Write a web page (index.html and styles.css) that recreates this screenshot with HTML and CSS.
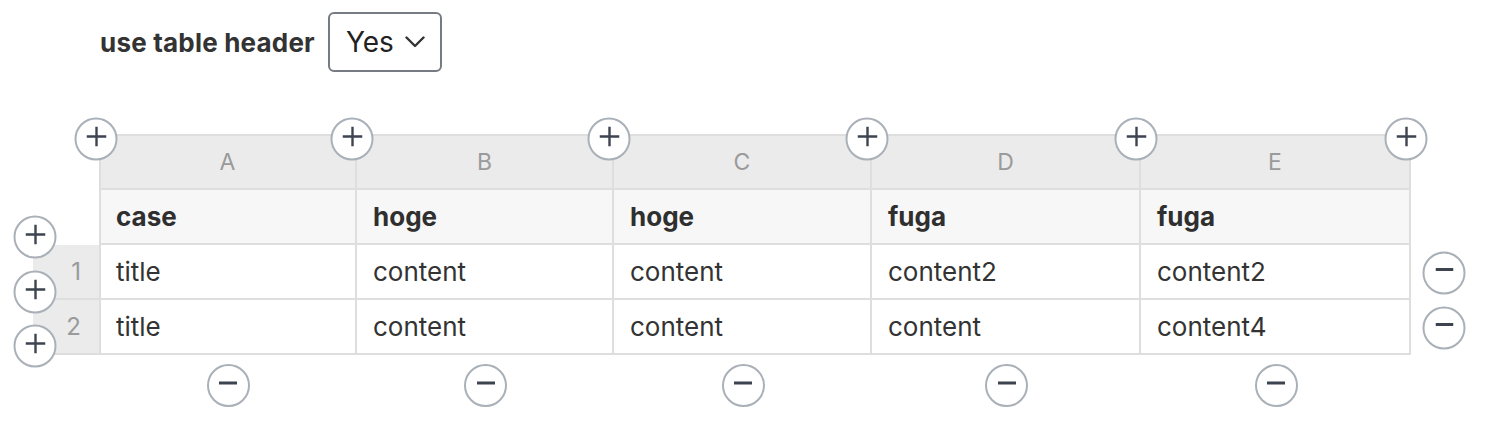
FILE: index.html
```html
<!DOCTYPE html>
<html lang="en">
<head>
<meta charset="utf-8">
<title>Table editor</title>
<link rel="stylesheet" href="styles.css">
</head>
<body>
<div class="page">
  <div class="option">
    <span class="option-label">use table header</span>
    <div class="select">
      <span class="select-value">Yes</span>
      <svg class="chevron" viewBox="0 0 20 12" aria-hidden="true"><path d="M1.5 1.5 L10 10 L18.5 1.5"/></svg>
    </div>
  </div>

  <div class="table-wrap">
    <table class="grid">
      <colgroup>
        <col class="c-num"><col class="c-a"><col class="c-b"><col class="c-c"><col class="c-d"><col class="c-e">
      </colgroup>
      <thead>
        <tr class="letters">
          <th class="num blank"></th>
          <th class="letter first">A<button class="circle col-add" aria-label="add column"><svg class="ico" viewBox="0 0 20 20"><path d="M10 0V20M0 10H20"/></svg></button></th>
          <th class="letter">B<button class="circle col-add" aria-label="add column"><svg class="ico" viewBox="0 0 20 20"><path d="M10 0V20M0 10H20"/></svg></button></th>
          <th class="letter">C<button class="circle col-add" aria-label="add column"><svg class="ico" viewBox="0 0 20 20"><path d="M10 0V20M0 10H20"/></svg></button></th>
          <th class="letter">D<button class="circle col-add" aria-label="add column"><svg class="ico" viewBox="0 0 20 20"><path d="M10 0V20M0 10H20"/></svg></button></th>
          <th class="letter">E<button class="circle col-add" aria-label="add column"><svg class="ico" viewBox="0 0 20 20"><path d="M10 0V20M0 10H20"/></svg></button><button class="circle col-add end" aria-label="add column"><svg class="ico" viewBox="0 0 20 20"><path d="M10 0V20M0 10H20"/></svg></button></th>
        </tr>
        <tr class="heads">
          <th class="num blank"></th>
          <th class="head first">case</th>
          <th class="head">hoge</th>
          <th class="head">hoge</th>
          <th class="head">fuga</th>
          <th class="head">fuga</th>
        </tr>
      </thead>
      <tbody>
        <tr>
          <td class="num">1<button class="circle row-add" aria-label="add row"><svg class="ico" viewBox="0 0 20 20"><path d="M10 0V20M0 10H20"/></svg></button></td>
          <td class="first">title</td>
          <td>content</td>
          <td>content</td>
          <td>content2</td>
          <td class="last">content2<button class="circle row-remove" aria-label="remove row"><svg class="ico minus" viewBox="0 0 18 4"><path d="M0 2H18"/></svg></button></td>
        </tr>
        <tr>
          <td class="num">2<button class="circle row-add" aria-label="add row"><svg class="ico" viewBox="0 0 20 20"><path d="M10 0V20M0 10H20"/></svg></button><button class="circle row-add after" aria-label="add row"><svg class="ico" viewBox="0 0 20 20"><path d="M10 0V20M0 10H20"/></svg></button></td>
          <td class="first">title</td>
          <td>content</td>
          <td>content</td>
          <td>content</td>
          <td class="last">content4<button class="circle row-remove" aria-label="remove row"><svg class="ico minus" viewBox="0 0 18 4"><path d="M0 2H18"/></svg></button></td>
        </tr>
      </tbody>
      <tfoot>
        <tr class="removers">
          <td></td>
          <td><button class="circle" aria-label="remove column"><svg class="ico minus" viewBox="0 0 18 4"><path d="M0 2H18"/></svg></button></td>
          <td><button class="circle" aria-label="remove column"><svg class="ico minus" viewBox="0 0 18 4"><path d="M0 2H18"/></svg></button></td>
          <td><button class="circle" aria-label="remove column"><svg class="ico minus" viewBox="0 0 18 4"><path d="M0 2H18"/></svg></button></td>
          <td><button class="circle" aria-label="remove column"><svg class="ico minus" viewBox="0 0 18 4"><path d="M0 2H18"/></svg></button></td>
          <td><button class="circle" aria-label="remove column"><svg class="ico minus" viewBox="0 0 18 4"><path d="M0 2H18"/></svg></button></td>
        </tr>
      </tfoot>
    </table>
  </div>
</div>
</body>
</html>
```

FILE: styles.css
```css
* { box-sizing: border-box; }

html, body {
  margin: 0;
  background: #ffffff;
}

body {
  font-family: "Inter", "Noto Sans", "Liberation Sans", sans-serif;
  color: #333333;
}

.page {
  padding-top: 12px;
}

.option {
  display: flex;
  align-items: center;
  gap: 13px;
  margin-left: 100px;
}

.option-label {
  font-size: 26px;
  font-weight: 700;
  letter-spacing: 0.2px;
  color: #333333;
}

.select {
  display: flex;
  align-items: center;
  gap: 11px;
  height: 60px;
  padding: 0 15px 0 16px;
  border: 2px solid #767b81;
  border-radius: 6px;
  background: #ffffff;
}

.select-value {
  font-size: 28px;
  color: #222222;
}

.chevron {
  width: 20px;
  height: 12px;
  fill: none;
  stroke: #333333;
  stroke-width: 2.4;
  stroke-linecap: round;
  stroke-linejoin: round;
}

.table-wrap {
  margin-top: 62px;
  margin-left: 33px;
}

.grid {
  table-layout: fixed;
  width: 1378px;
  border-collapse: separate;
  border-spacing: 0;
  font-size: 26px;
}

.c-num { width: 66px; }
.c-a { width: 258px; }
.c-b { width: 257px; }
.c-c { width: 258px; }
.c-d { width: 269px; }
.c-e { width: 270px; }

.grid th,
.grid td {
  position: relative;
  height: 55px;
  padding: 0 16px;
  border-right: 2px solid #dedede;
  border-bottom: 2px solid #dedede;
  text-align: left;
  vertical-align: middle;
  font-weight: 400;
  white-space: nowrap;
}

.grid .first {
  border-left: 2px solid #dedede;
  padding-left: 15px;
}

.grid .letters th {
  height: 56px;
  border-top: 2px solid #dedede;
  background: #ebebeb;
  color: #9a9a9a;
  text-align: center;
  font-size: 23px;
}

.grid .heads th {
  background: #f7f7f7;
  font-weight: 700;
  color: #2f2f2f;
}

.grid .num {
  background: #ebebeb;
  color: #9a9a9a;
  text-align: right;
  padding-right: 18px;
  border-right: none;
  font-size: 24px;
}

.grid .letters th.blank,
.grid .heads th.blank {
  background: #ffffff;
  border: none;
}

.grid tbody td {
  color: #333333;
}

.grid tfoot td {
  height: 61px;
  padding: 0;
  border: none;
  text-align: center;
}

.circle {
  display: inline-flex;
  align-items: center;
  justify-content: center;
  width: 43px;
  height: 43px;
  padding: 0;
  border: 2px solid #aab0b8;
  border-radius: 50%;
  background: #ffffff;
  cursor: pointer;
  vertical-align: middle;
}

.ico {
  width: 20px;
  height: 20px;
  margin-top: -6px;
  fill: none;
  stroke: #3d4450;
  stroke-width: 2.4;
}

.ico.minus {
  width: 18px;
  height: 4px;
  stroke-width: 3;
}

.col-add {
  position: absolute;
  left: -5px;
  top: 3px;
  transform: translate(-50%, -50%);
}

.col-add.end {
  left: auto;
  right: 3px;
  transform: translate(50%, -50%);
}

.row-add {
  position: absolute;
  left: 2px;
  top: -8px;
  transform: translate(-50%, -50%);
}

.row-add.after {
  top: auto;
  bottom: 7px;
  transform: translate(-50%, 50%);
}

.row-remove {
  position: absolute;
  right: -35px;
  top: calc(50% + 1px);
  transform: translate(50%, -50%);
}
```
